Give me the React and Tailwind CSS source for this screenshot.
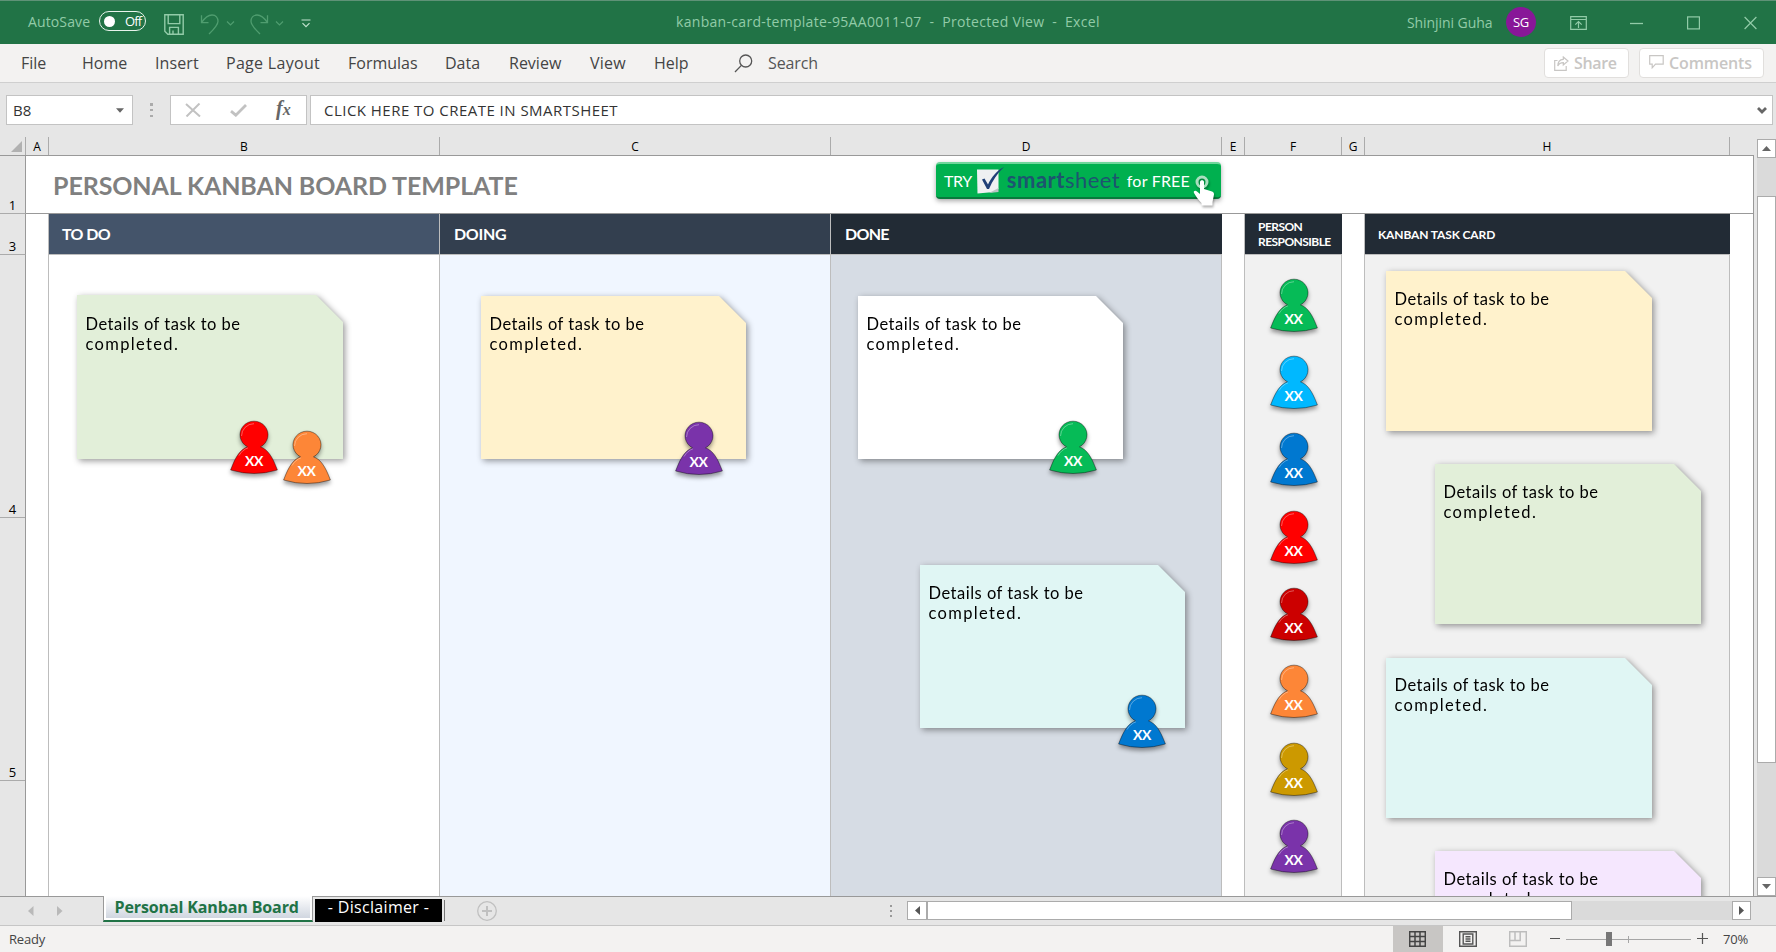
import React from "react";

const UI = "font-['Open_Sans','Liberation_Sans',sans-serif]";
const SHEET = "font-['Lato','Liberation_Sans',sans-serif]";

/* ---------- Title bar ---------- */

function TitleBar() {
  return (
    <header className="relative flex h-11 shrink-0 items-center border-t border-[#5f9277] bg-[#217346] text-[14px] leading-5 text-[#92cba8]">
      <span className="ml-7 mb-[2px] w-[63px] whitespace-nowrap tracking-[0.12px]">AutoSave</span>
      <span className="mb-[3px] ml-2 flex h-5 w-[47px] items-center rounded-full border border-[#e8f3ec] text-[13px] text-white">
        <span className="ml-1 h-[11px] w-[11px] rounded-full bg-white" />
        <span className="ml-[10px] tracking-[-0.9px]">Off</span>
      </span>
      <svg className="ml-[18px] mt-1" width="20" height="21" viewBox="0 0 20 21" fill="none" stroke="#92cba8" strokeWidth="1.4">
        <path d="M.8.8h18.4v19.4H3.8L.8 17.2z" />
        <path d="M4.2 1v8.6h11.6V1M5.6 20v-6.6h8.8V20M9 20v-3.6" />
      </svg>
      <svg className="ml-4 mt-1" width="20" height="21" viewBox="0 0 20 21" fill="none" stroke="#4f9d6f" strokeWidth="1.3">
        <path d="M1.5 1.2v7.5h7M1.5 8.7C5 3.5 8.5 1 12 1c4 0 6 3 6 6.300 0 3.500-3 7-9 12.700" />
      </svg>
      <svg className="ml-[6px] mt-[2px]" width="9" height="5" viewBox="0 0 9 5" fill="none" stroke="#4f9d6f" strokeWidth="1.2">
        <path d="M1 .5l3.500 3.500L8 .5" />
      </svg>
      <svg className="ml-[14px] mt-1" width="20" height="21" viewBox="0 0 20 21" fill="none" stroke="#4f9d6f" strokeWidth="1.3">
        <path d="M18.500 1.200v7.500h-7M18.500 8.700C15 3.500 11.500 1 8 1 4 1 2 4 2 7.300c0 3.500 3 7 9 12.700" />
      </svg>
      <svg className="ml-[6px] mt-[2px]" width="9" height="5" viewBox="0 0 9 5" fill="none" stroke="#4f9d6f" strokeWidth="1.2">
        <path d="M1 .5l3.500 3.500L8 .5" />
      </svg>
      <svg className="ml-[17px] mt-[2px]" width="10" height="9" viewBox="0 0 10 9" fill="none" stroke="#c3e3cf" strokeWidth="1.2">
        <path d="M.5 1h9M1.500 4.200L5 7.700l3.500-3.500" />
      </svg>
      <span className="mb-px ml-[365px] w-[426px] whitespace-pre tracking-[0.31px]">kanban-card-template-95AA0011-07  -  Protected View  -  Excel</span>
      <span className="ml-auto mt-px w-[87px] whitespace-nowrap tracking-[-0.07px]">Shinjini Guha</span>
      <span className="mb-px ml-3 flex h-[30px] w-[30px] items-center justify-center rounded-full bg-[#881798] text-[13px] tracking-[-0.3px] text-white">SG</span>
      <svg className="ml-[34px]" width="17" height="14" viewBox="0 0 17 14" fill="none" stroke="#92cba8" strokeWidth="1.200">
        <path d="M.7.7h15.600v12.600H.7zM.7 3.500h15.600M8.500 12V5.800M5.300 8.600l3.200-3 3.200 3" />
      </svg>
      <svg className="ml-[43px]" width="13" height="14" viewBox="0 0 13 14" stroke="#92cba8" strokeWidth="1.300">
        <path d="M0 7.500h13" />
      </svg>
      <svg className="ml-[44px]" width="13" height="14" viewBox="0 0 13 14" fill="none" stroke="#92cba8" strokeWidth="1.200">
        <rect x=".6" y=".9" width="11.800" height="12" />
      </svg>
      <svg className="ml-[44px] mr-[19px]" width="13" height="14" viewBox="0 0 13 14" stroke="#92cba8" strokeWidth="1.200">
        <path d="M.6 1l11.800 12M12.400 1L.6 13" />
      </svg>
    </header>
  );
}

/* ---------- Menu ---------- */

const MENU = [
  ["File", "w-[61px]"],
  ["Home", "w-[73px]"],
  ["Insert", "w-[71px] tracking-[0.1px]"],
  ["Page Layout", "w-[122px] tracking-[0.3px]"],
  ["Formulas", "w-[97px]"],
  ["Data", "w-[64px]"],
  ["Review", "w-[81px]"],
  ["View", "w-[64px] tracking-[0.25px]"],
  ["Help", "w-[79px]"],
];

function MenuBar() {
  return (
    <nav className="flex h-[39px] shrink-0 items-center border-b border-[#cfcfcf] bg-[#f3f2f1] pl-[21px] text-[16px] leading-5 text-[#444]">
      {MENU.map(([label, cls]) => (
        <span key={label} className={`${cls} shrink-0 whitespace-nowrap`}>{label}</span>
      ))}
      <svg className="ml-px" width="19" height="19" viewBox="0 0 19 19" fill="none" stroke="#555" strokeWidth="1.300">
        <circle cx="11.700" cy="7" r="6" />
        <path d="M7.400 11.400L1 18" />
      </svg>
      <span className="ml-[15px] tracking-[-0.1px] text-[#555]">Search</span>
      <span className="ml-auto flex h-[30px] w-[85px] items-center rounded border border-[#e1dfdd] bg-white pl-[9px] font-semibold text-[#c8c6c4]">
        <svg width="15" height="15" viewBox="0 0 15 15" fill="none" stroke="#c8c6c4" strokeWidth="1.200">
          <path d="M3.500 4.500H.7v9.800h11.500V10M9.300 1l4.700 4-4.700 4V6.600C6.500 6.600 4.800 7.600 3.800 10c0-4 2-6.500 5.500-6.700z" />
        </svg>
        <span className="ml-[5px] tracking-[-0.35px]">Share</span>
      </span>
      <span className="ml-[10px] mr-3 flex h-[30px] w-[125px] items-center rounded border border-[#e1dfdd] bg-white pl-[9px] font-semibold text-[#c8c6c4]">
        <svg className="mb-[3px]" width="15" height="14" viewBox="0 0 15 14" fill="none" stroke="#c8c6c4" strokeWidth="1.200">
          <path d="M.7.7h13.500v8.500H6.500l-3.300 3.600V9.200H.7z" />
        </svg>
        <span className="ml-[5px] tracking-[-0.13px]">Comments</span>
      </span>
    </nav>
  );
}

/* ---------- Formula bar ---------- */

function FormulaBar() {
  return (
    <div className="flex h-[54px] shrink-0 items-start bg-[#e6e6e6] pl-[6px] pr-[3px] pt-3 text-[15px] text-[#333]">
      <div className="flex h-[30px] w-[127px] items-center justify-between border border-[#c3c3c3] bg-white pl-[6px] pr-2">
        <span className="text-[15px]">B8</span>
        <svg width="8" height="5" viewBox="0 0 8 5"><path d="M0 .3h8L4 4.700z" fill="#666" /></svg>
      </div>
      <div className="ml-[17px] mt-2 flex h-[14px] w-[3px] flex-col justify-between">
        <span className="h-[2.500px] w-[2.500px] bg-[#ababab]" />
        <span className="h-[2.500px] w-[2.500px] bg-[#ababab]" />
        <span className="h-[2.500px] w-[2.500px] bg-[#ababab]" />
      </div>
      <div className="ml-[17px] flex h-[30px] w-[137px] items-center border border-[#c3c3c3] bg-white">
        <svg className="ml-[14px]" width="16" height="14" viewBox="0 0 16 14" stroke="#c2c2c2" strokeWidth="2"><path d="M1 1l14 12.500M14.500 .5L1.500 13.500" /></svg>
        <svg className="ml-[29px]" width="17" height="13" viewBox="0 0 17 13" fill="none" stroke="#c2c2c2" strokeWidth="2.800"><path d="M1 7.200l4.800 4L16 1" /></svg>
        <span className="ml-[29px] mb-1 flex items-baseline font-['Liberation_Serif',serif] font-bold italic leading-none text-[#666]">
          <span className="text-[20px]">f</span><span className="text-[16px]">x</span>
        </span>
      </div>
      <div className="ml-[3px] flex h-[30px] flex-1 items-center justify-between border border-[#c3c3c3] bg-white pl-[13px] pr-[5px]">
        <span className="tracking-[0.47px]">CLICK HERE TO CREATE IN SMARTSHEET</span>
        <svg width="10" height="7" viewBox="0 0 10 7" fill="none" stroke="#666" strokeWidth="2.800"><path d="M1 1l4 4 4-4" /></svg>
      </div>
    </div>
  );
}

/* ---------- Shapes placed on the sheet ---------- */

function Person({ color, className = "" }) {
  return (
    <div className={`${className} h-[52px] w-12`}>
      <div className="relative h-full w-full">
        <svg className="overflow-visible drop-shadow-[0_3px_2px_rgba(0,0,0,0.4)]" width="48" height="52" viewBox="0 0 48 52">
          <g fill={color} stroke="rgba(0,0,0,0.4)" strokeWidth="1">
            <path d="M17.500 24.800A14 13.600 0 1 1 30.500 24.800C37.500 27.500 42 33.500 47.400 48Q24 55 .6 48C6 33.500 10.500 27.500 17.500 24.800z" />
          </g>
          <path d="M11.500 14A12.500 12.500 0 0 1 24 1.700M9 33.500C11.500 29.500 14.500 27 18 25.800" fill="none" stroke="rgba(255,255,255,0.35)" strokeWidth="1" />
        </svg>
        <span className="absolute inset-x-0 top-[30px] text-center text-[14px] font-bold leading-[18px] tracking-[-0.3px] text-white">XX</span>
      </div>
    </div>
  );
}

function Card({ color, className, pad = "pt-[18px]" }) {
  return (
    <div className={`absolute ${className} drop-shadow-[2px_2px_3px_rgba(0,0,0,0.4)]`}>
      <div className={`h-full w-full pl-[8.500px] text-[16.500px] leading-5 text-black [clip-path:polygon(0_0,calc(100%_-_27px)_0,100%_27px,100%_100%,0_100%)] ${pad} ${color}`}>
        <div className="whitespace-nowrap tracking-[0.500px]">Details of task to be</div>
        <div className="tracking-[1.350px]">completed.</div>
      </div>
    </div>
  );
}

function TryButton() {
  return (
    <div className="relative ml-[105px] mt-[6px] flex h-[37px] w-[285px] items-center rounded-[4px] border-b-2 border-t-2 border-b-[#087a3c] border-t-[#6fd69b] bg-[#00b04f] pl-2 text-[16px] text-white shadow-[0_2px_5px_rgba(0,0,0,0.35)]">
      <span className="mt-px tracking-[-0.4px]">TRY</span>
      <svg className="ml-[5px] overflow-visible" width="26" height="27" viewBox="0 0 26 27">
        <path d="M0 2.500h21.500V22L17 25 .5 26.500z" fill="#eef0f2" />
        <path d="M12 26l9.500-5V25z" fill="#b9c4c4" />
        <path d="M5 12.500l2.500-1 3.500 6C14.500 10 19.500 4 27 0 20 6.500 15.500 14 12 22h-2z" fill="#1f3f77" />
      </svg>
      <span className="mb-px ml-[4px] w-[113px] whitespace-nowrap text-[22px] leading-none text-[#1d5470]">
        <b className="tracking-[0.500px]">smart</b><span className="tracking-[0.450px]">sheet</span>
      </span>
      <span className="ml-[7px] mt-px whitespace-nowrap tracking-[0.2px]">for FREE</span>
      <svg className="absolute left-[256px] top-[11px] overflow-visible drop-shadow-[1px_2px_1px_rgba(0,0,0,0.3)]" width="24" height="32" viewBox="0 0 24 32">
        <circle cx="10" cy="7" r="5" fill="none" stroke="#a9dfbf" strokeWidth="3" />
        <path d="M8 7c0-2.400 4-2.400 4 0v7l8 2.500c1.600.5 2 1.500 2 3L20.500 27v3.500h-11V28C6 24.500 4 21.500 2 18c-1-2 1.500-3 3-1.500L8 19z" fill="#fff" />
      </svg>
    </div>
  );
}

/* ---------- Sheet ---------- */

const COLS = "grid grid-cols-[26px_23px_391px_391px_391px_23px_97px_23px_365px_24px]";

const PEOPLE = ["#06bb57", "#00b8ff", "#0078d0", "#ff0000", "#cc0000", "#fd8637", "#cc9900", "#7a33aa"];

function ColumnHeads() {
  return (
    <div className={`${COLS} h-[19px] shrink-0 border-b border-[#999] bg-[#e6e6e6] text-center text-[12px] leading-[20px] text-black`}>
      <div className="flex items-end justify-end border-r border-[#ababab] pb-[3px] pr-[3px]">
        <svg width="11" height="11" viewBox="0 0 11 11"><path d="M11 0v11H0z" fill="#b1b1b1" /></svg>
      </div>
      {["A", "B", "C", "D", "E", "F", "G", "H"].map((c) => (
        <div key={c} className="h-[18px] border-r border-[#ababab]">{c}</div>
      ))}
      <div />
    </div>
  );
}

function RowHead({ n, className }) {
  return (
    <div className={`flex items-end justify-center border-b border-[#ababab] bg-[#e6e6e6] text-[13px] leading-[15px] text-black ${UI} ${className}`}>{n}</div>
  );
}

function Sheet() {
  return (
    <div className={`flex h-full w-[1754px] shrink-0 flex-col overflow-hidden ${UI}`}>
      <ColumnHeads />
      <div className={`flex h-[58px] shrink-0 ${SHEET}`}>
        <RowHead n="1" className="w-[26px] border-r border-r-[#999]" />
        <div className="flex flex-1 border-b border-r border-[#999] bg-white">
          <h1 className="flex w-[805px] items-center whitespace-nowrap pl-[27px] pt-[2px] text-[25px] font-bold leading-none tracking-[-0.100px] text-[#808080]">PERSONAL KANBAN BOARD TEMPLATE</h1>
          <TryButton />
        </div>
      </div>
      <div className={`${COLS} h-[41px] shrink-0 bg-white text-[16px] font-bold text-white ${SHEET}`}>
        <RowHead n="3" className="border-r border-r-[#999] font-normal" />
        <div className="border-r border-[#bdbdbd]" />
        <div className="flex items-center border-b border-r border-[#bdbdbd] bg-[#44546a] pl-[13px] tracking-[-0.600px]">TO DO</div>
        <div className="flex items-center border-b border-r border-[#bdbdbd] bg-[#333f4f] pl-[14px] tracking-[-0.3px]">DOING</div>
        <div className="flex items-center border-b border-[#bdbdbd] bg-[#222b35] pl-[14px] tracking-[-0.7px]">DONE</div>
        <div className="border-r border-[#bdbdbd]" />
        <div className="flex items-center border-b border-[#bdbdbd] bg-[#222b35] pl-[13px] text-[12px] leading-[15px] tracking-[-0.550px]">PERSON<br />RESPONSIBLE</div>
        <div className="border-r border-[#bdbdbd]" />
        <div className="flex items-center border-b border-[#bdbdbd] bg-[#222b35] pl-[13px] pt-[2px] text-[12px] tracking-[-0.130px]">KANBAN TASK CARD</div>
        <div className="border-r border-[#999]" />
      </div>
      <div className={`${COLS} min-h-0 flex-1 bg-white ${SHEET}`}>
        <div className="flex flex-col border-r border-[#999] bg-[#e6e6e6]">
          <RowHead n="4" className="h-[263px]" />
          <RowHead n="5" className="h-[263px]" />
        </div>
        <div className="border-r border-[#bdbdbd]" />
        <div className="relative border-r border-[#bdbdbd]">
          <Card color="bg-[#e2efd9]" className="left-[28px] top-[40px] h-[164px] w-[266px]" pad="pt-[19px]" />
          <Person color="#ff0000" className="absolute left-[181px] top-[167px]" />
          <Person color="#fd8637" className="absolute left-[233.500px] top-[177px]" />
        </div>
        <div className="relative border-r border-[#bdbdbd] bg-[#f0f6ff]">
          <Card color="bg-[#fff2cc]" className="left-[41px] top-[41px] h-[163px] w-[265px]" />
          <Person color="#7a33aa" className="absolute left-[234.500px] top-[168px]" />
        </div>
        <div className="relative border-r border-[#bdbdbd] bg-[#d6dce4]">
          <Card color="bg-white" className="left-[27px] top-[41px] h-[163px] w-[265px]" />
          <Person color="#06bb57" className="absolute left-[218px] top-[167px]" />
          <Card color="bg-[#e0f6f4]" className="left-[89px] top-[310px] h-[163px] w-[265px]" />
          <Person color="#0078d0" className="absolute left-[287px] top-[440.500px]" />
        </div>
        <div className="border-r border-[#bdbdbd]" />
        <div className="flex flex-col items-center gap-[25.400px] border-r border-[#bdbdbd] bg-[#f1f1f1] pl-px pt-[24.500px]">
          {PEOPLE.map((c) => <Person key={c} color={c} className="shrink-0" />)}
        </div>
        <div className="border-r border-[#bdbdbd]" />
        <div className="relative border-r border-[#bdbdbd] bg-[#f1f1f1]">
          <Card color="bg-[#fff2cc]" className="left-[21px] top-[16px] h-[160px] w-[266px]" />
          <Card color="bg-[#e2efd9]" className="left-[70px] top-[209px] h-[160px] w-[266px]" />
          <Card color="bg-[#e0f6f4]" className="left-[21px] top-[403px] h-[160px] w-[266px]" pad="pt-[17px]" />
          <Card color="bg-[#f5e7fe]" className="left-[70px] top-[596px] h-[160px] w-[266px]" />
        </div>
        <div className="border-r border-[#999]" />
      </div>
    </div>
  );
}

function VScroll() {
  return (
    <div className="flex flex-1 flex-col bg-[#e6e6e6] pl-[3px] pt-[2px]">
      <div className="flex h-[19px] items-center justify-center border border-[#ababab] bg-white">
        <svg width="9" height="5" viewBox="0 0 9 5"><path d="M4.500 0L9 5H0z" fill="#666" /></svg>
      </div>
      <div className="h-[38px] bg-[#dadada]" />
      <div className="h-[567px] border border-[#ababab] bg-white" />
      <div className="flex-1 bg-[#dadada]" />
      <div className="flex h-[19px] items-center justify-center border border-[#ababab] bg-white">
        <svg width="9" height="5" viewBox="0 0 9 5"><path d="M0 0h9L4.500 5z" fill="#666" /></svg>
      </div>
    </div>
  );
}

/* ---------- Sheet tabs and status ---------- */

function TabBar() {
  return (
    <div className="flex h-[30px] shrink-0 border-b border-[#c6c6c6] bg-[#e6e6e6] text-[16px]">
      <div className="flex w-[103px] items-center border-t border-[#999] pl-7">
        <svg width="6" height="10" viewBox="0 0 6 10"><path d="M5.500 0v10L0 5z" fill="#b9b9b9" /></svg>
        <svg className="ml-[23px]" width="6" height="10" viewBox="0 0 6 10"><path d="M0 0v10l5.500-5z" fill="#b9b9b9" /></svg>
      </div>
      <div className="h-[26px] w-[210px] border-x border-b-2 border-b-[#217346] border-l-[#999] border-r-[#999] bg-white px-[2px] pb-[2px]">
        <div className="flex h-full items-center bg-linear-to-b from-white to-[#d0d6e0] pl-[8.500px] font-bold leading-none tracking-[-0.120px] text-[#217346]">Personal Kanban Board</div>
      </div>
      <div className="flex flex-1 items-start border-t border-[#999]">
        <div className="ml-[2px] mt-[2px] flex h-[23px] w-[127px] items-center justify-center bg-black pb-[7px] leading-none tracking-[0.320px] text-white">- Disclaimer -</div>
        <div className="ml-[2px] mt-[3px] h-[21px] w-px bg-[#777]" />
        <svg className="ml-[32px] mt-1" width="20" height="20" viewBox="0 0 20 20" fill="none" stroke="#c0c0c0" strokeWidth="1.300">
          <circle cx="10" cy="10" r="9.300" /><path d="M10 5v10M5 10h10" strokeWidth="2" />
        </svg>
        <div className="ml-[393px] mt-2 flex h-3 w-[3px] flex-col justify-between">
          <span className="h-[2px] w-[2px] bg-[#999]" /><span className="h-[2px] w-[2px] bg-[#999]" /><span className="h-[2px] w-[2px] bg-[#999]" />
        </div>
        <div className="ml-[14px] mt-1 flex h-[19px] w-[844px] bg-[#dadada]">
          <div className="flex w-[20px] items-center justify-center border border-[#ababab] bg-white">
            <svg width="5" height="9" viewBox="0 0 5 9"><path d="M5 0v9L0 4.500z" fill="#555" /></svg>
          </div>
          <div className="w-[645px] border border-[#ababab] bg-white" />
          <div className="ml-auto flex w-[19px] items-center justify-center border border-[#ababab] bg-white">
            <svg width="5" height="9" viewBox="0 0 5 9"><path d="M0 0v9l5-4.500z" fill="#555" /></svg>
          </div>
        </div>
      </div>
    </div>
  );
}

function StatusBar() {
  return (
    <footer className="flex h-[26px] shrink-0 items-center bg-[#f3f2f1] text-[13px] leading-none text-[#444]">
      <span className="ml-[9px] tracking-[-0.200px]">Ready</span>
      <span className="ml-auto flex h-full w-[50px] items-center justify-center bg-[#c8c6c4]">
        <svg width="17" height="16" viewBox="0 0 17 16" fill="none" stroke="#444" strokeWidth="1.500"><path d="M.7.7h15.600v14.600H.7zM.7 5.500h15.600M.7 10.500h15.600M6 .7v14.600M11 .7v14.600" /></svg>
      </span>
      <svg className="ml-4" width="18" height="16" viewBox="0 0 18 16" fill="none" stroke="#555" strokeWidth="1.400"><path d="M.7.7h16.600v14.600H.7zM4.200 3h9.600v10H4.200zM6.500 5.800h5M6.500 8h5M6.500 10.300h5" /></svg>
      <svg className="ml-8" width="18" height="16" viewBox="0 0 18 16" fill="none" stroke="#bdbdbd" strokeWidth="1.500"><path d="M.7.7h16.600v14.600H.7zM6 .7v8.800M.7 9.500h10.500V.7" /></svg>
      <svg className="ml-[23px]" width="158" height="16" viewBox="0 0 158 16" stroke="#555" strokeWidth="1.200">
        <path d="M0 7.500h10M147 7.500h11M152.500 2v11" />
        <path d="M16 8.500h125M78.500 5v7" stroke="#a6a6a6" strokeWidth="1" />
        <path d="M56 1h6v14h-6z" fill="#777" stroke="none" />
      </svg>
      <span className="ml-[15px] mr-[28px] tracking-[-0.200px]">70%</span>
    </footer>
  );
}

export default function App() {
  return (
    <div className={`flex h-[952px] w-[1776px] flex-col overflow-hidden ${UI}`}>
      <TitleBar />
      <MenuBar />
      <FormulaBar />
      <main className="flex h-[759px] shrink-0">
        <Sheet />
        <VScroll />
      </main>
      <TabBar />
      <StatusBar />
    </div>
  );
}
